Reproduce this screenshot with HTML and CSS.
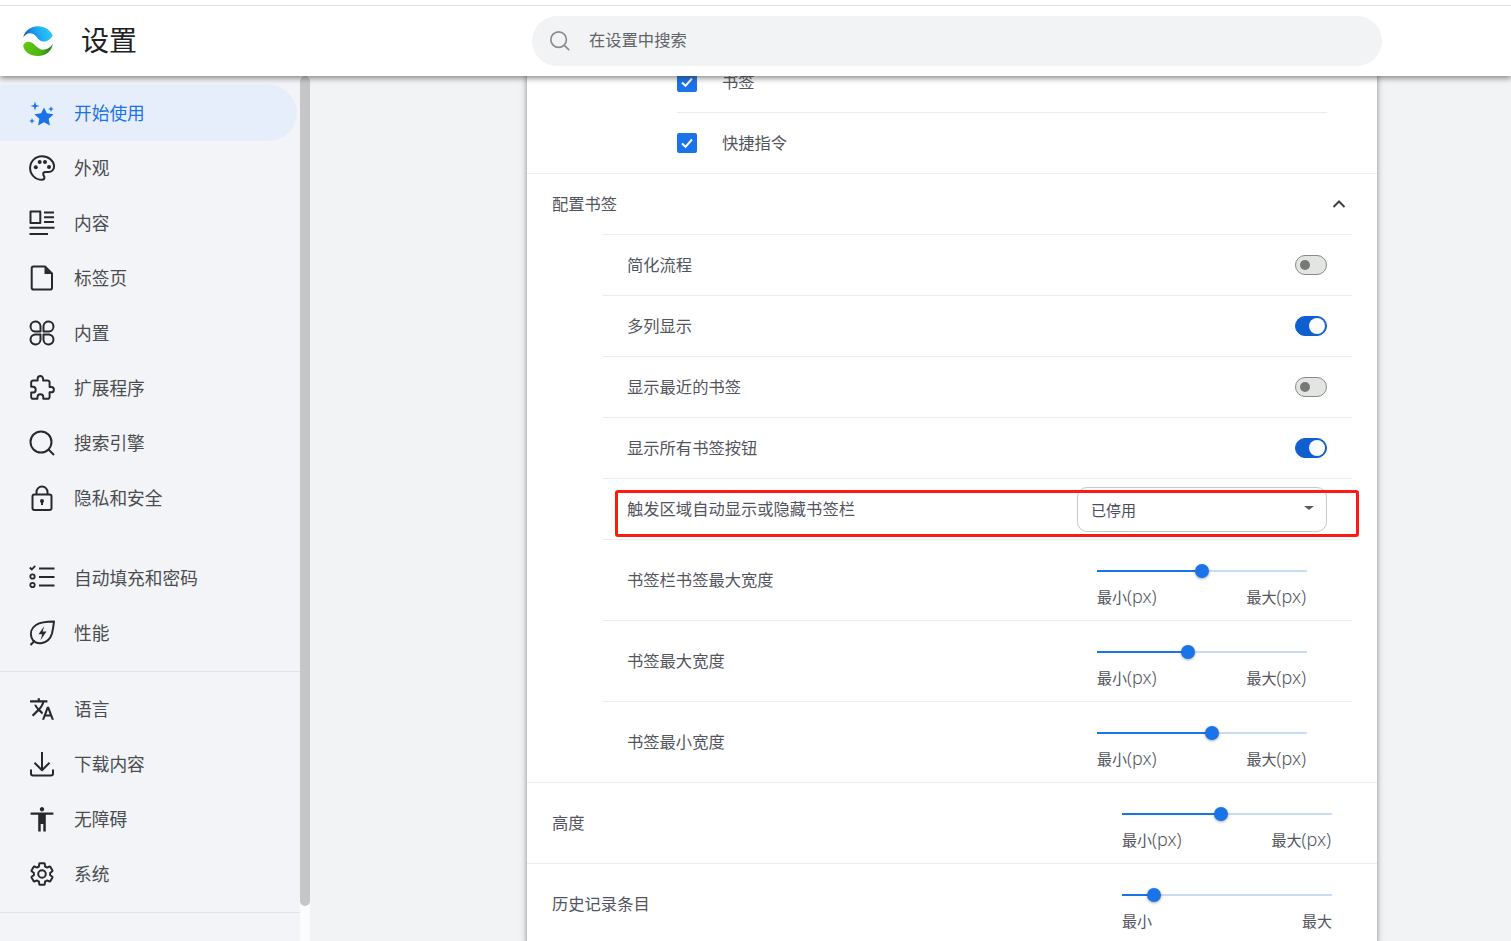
FILE: index.html
```html
<!DOCTYPE html>
<html lang="zh-CN">
<head>
<meta charset="utf-8">
<title>设置</title>
<link rel="stylesheet" href="styles.css">
</head>
<body>
<header class="topbar">
  <div class="brand">
    <svg class="logo" viewBox="0 0 30 30">
      <defs>
        <linearGradient id="lgb" x1="0" y1="0.5" x2="1" y2="0.3"><stop offset="0" stop-color="#1a4f9e"/><stop offset="0.3" stop-color="#1a8bea"/><stop offset="0.6" stop-color="#1fb2f5"/><stop offset="1" stop-color="#2bcdf9"/></linearGradient>
        <linearGradient id="lgg" x1="0" y1="0.4" x2="1" y2="0.6"><stop offset="0" stop-color="#62c814"/><stop offset="0.65" stop-color="#4cb212"/><stop offset="1" stop-color="#2a6f33"/></linearGradient>
      </defs>
      <path fill="url(#lgb)" d="M.3 11.500C1.500 4.500 8 .2 15 .2c6.500 0 12.500 3.800 14.700 9.300-2.200 4-6 6.500-10 6C15 15 13.500 8.500 8.500 7.500 5 6.800 2 8.500 .3 11.500z"/>
      <path fill="url(#lgg)" d="M.2 19C1.500 16.700 3.500 15.500 6 15.700c5 .4 8 7.500 13.500 8 4 .3 8-2 10.300-6.200C29.300 24.500 23 30 15 30 6.800 30 .5 25.500 .2 19z"/>
    </svg>
    <h1 class="title">设置</h1>
  </div>
  <div class="search">
    <svg class="search-ico" viewBox="0 0 24 24"><circle cx="10.500" cy="10.500" r="8.500"/><path d="M16.700 16.700L22 22"/></svg>
    <span>在设置中搜索</span>
  </div>
</header>
<div class="layout">
  <nav class="sidebar">
    <a class="nav-item active">
      <svg class="ico" viewBox="0 0 26 26"><path class="fill" d="M15 7.500l2.900 5.800 6.700.9-4.900 4.600 1.200 6.800-5.900-3.300-5.900 3.300 1.200-6.800-4.900-4.600 6.700-.9z"/><path class="fill" d="M6 1.500l1.100 3.400 3.400 1.100-3.400 1.100L6 10.500 4.900 7.100 1.500 6l3.400-1.100zM22 6l.8 2.200 2.200.8-2.200.8L22 12l-.8-2.200L19 9l2.200-.8zM3 18l.8 2.200L6 21l-2.200.8L3 24l-.8-2.200L0 21l2.200-.8z"/></svg>
      <span>开始使用</span>
    </a>
    <a class="nav-item">
      <svg class="ico" viewBox="0 0 26 26"><path class="line" d="M13 1.200C6.400 1.200 1.100 6.500 1.100 13S6.400 24.800 13 24.800c1.400 0 2.400-1 2.400-2.300 0-.7-.3-1.200-.6-1.600-.4-.5-.6-1-.6-1.600 0-1.300 1-2.300 2.300-2.300h2.800c3.600 0 5.800-2.600 5.800-5.700C24.900 5.700 19.600 1.200 13 1.200z"/><circle class="fill" cx="6.800" cy="12.300" r="2"/><circle class="fill" cx="10.700" cy="7" r="2"/><circle class="fill" cx="16" cy="7" r="2"/><circle class="fill" cx="20" cy="12" r="2"/></svg>
      <span>外观</span>
    </a>
    <a class="nav-item">
      <svg class="ico" viewBox="0 0 26 26"><path class="line" d="M1.500 1.500h9.800v11.500H1.500zM15 2.500h10M15 7.200h10M15 12h10M.5 17.800h25M.5 24h18.500"/></svg>
      <span>内容</span>
    </a>
    <a class="nav-item">
      <svg class="ico" viewBox="0 0 26 26"><path class="line" d="M4.500 1.500h11.500l7 7v14.200c0 1-.8 1.800-1.800 1.800H4.500c-1 0-1.800-.8-1.800-1.800V3.300c0-1 .8-1.800 1.800-1.800z"/><path class="fill" d="M15.500 2l7 7h-7z"/></svg>
      <span>标签页</span>
    </a>
    <a class="nav-item">
      <svg class="ico" viewBox="0 0 26 26"><path class="line" d="M11.500 11.500H6A5 5 0 1 1 11.500 6zM14.500 11.500H20A5 5 0 1 0 14.500 6zM11.500 14.500H6A5 5 0 1 0 11.500 20zM14.500 14.500H20A5 5 0 1 1 14.500 20z"/></svg>
      <span>内置</span>
    </a>
    <a class="nav-item">
      <svg class="ico" viewBox="0 0 24 24"><path class="line thin" d="M20.500 11H19V7c0-1.100-.9-2-2-2h-4V3.500C13 2.120 11.880 1 10.500 1S8 2.120 8 3.500V5H4c-1.100 0-2 .9-2 2v3.800h1.500c1.490 0 2.700 1.210 2.700 2.700s-1.210 2.700-2.700 2.700H2V20c0 1.100.9 2 2 2h3.800v-1.500c0-1.490 1.210-2.700 2.700-2.700s2.700 1.210 2.700 2.700V22H17c1.100 0 2-.9 2-2v-4h1.500c1.380 0 2.500-1.120 2.500-2.500S21.880 11 20.500 11z"/></svg>
      <span>扩展程序</span>
    </a>
    <a class="nav-item">
      <svg class="ico" viewBox="0 0 26 26"><circle class="line" cx="12" cy="12" r="10.500"/><path class="line" d="M19.500 19.500L25 25"/></svg>
      <span>搜索引擎</span>
    </a>
    <a class="nav-item">
      <svg class="ico" viewBox="0 0 26 26"><rect class="line" x="3.500" y="9.500" width="19" height="15.500" rx="2"/><path class="line" d="M7.500 9.500V7a5.500 5.500 0 0 1 11 0v2.500"/><circle class="fill" cx="13" cy="16" r="2"/><path class="fill" d="M12 16h2v4h-2z"/></svg>
      <span>隐私和安全</span>
    </a>
    <div class="nav-gap"></div>
    <a class="nav-item">
      <svg class="ico" viewBox="0 0 26 26"><path class="line thin" d="M.8 2.500l2 2L6.200.8"/><circle class="line thin" cx="3.500" cy="11.500" r="2.200"/><circle class="line thin" cx="3.500" cy="20" r="2.200"/><path class="line" d="M10 3.500h15.500M10 12h15.500M10 20.500h15.500"/></svg>
      <span>自动填充和密码</span>
    </a>
    <a class="nav-item">
      <svg class="ico" viewBox="0 0 26 26"><path class="line" d="M25 1.500c-7.500 0-13.500.5-18 3.500C2.500 8 1 13 2.500 17.500c1.200 4 5.500 6.500 10.500 5.500 5-1 8.500-4.500 10-9.500.8-3.500 1.500-7.500 2-12zM6 20.500l-4.500 4.500"/><path class="fill" d="M15.300 6l-5.800 8.300h3.700l-1.700 6 6-8.700h-3.900z"/></svg>
      <span>性能</span>
    </a>
    <div class="nav-div first"></div>
    <a class="nav-item">
      <svg class="ico" viewBox="0 0 24 24"><path class="fill" d="M12.870 15.070l-2.540-2.510.03-.03c1.740-1.940 2.980-4.170 3.710-6.530H17V4h-7V2H8v2H1v1.990h11.170C11.500 7.920 10.440 9.750 9 11.350 8.070 10.320 7.300 9.190 6.690 8h-2c.73 1.630 1.730 3.170 2.980 4.560l-5.090 5.020L4 19l5-5 3.110 3.110.76-2.040zM18.500 10h-2L12 22h2l1.120-3h4.750L21 22h2l-4.500-12zm-2.620 7l1.620-4.330L19.120 17h-3.240z"/></svg>
      <span>语言</span>
    </a>
    <a class="nav-item">
      <svg class="ico" viewBox="0 0 26 26"><path class="line" d="M13 1v18M5.500 11.800L13 19.200l7.500-7.400M2 18.500v4c0 1.200.8 2 2 2h18c1.200 0 2-.8 2-2v-4"/></svg>
      <span>下载内容</span>
    </a>
    <a class="nav-item">
      <svg class="ico" viewBox="0 0 24 24"><path class="fill" d="M12 1c1.100 0 2 .9 2 2s-.9 2-2 2-2-.9-2-2 .9-2 2-2zm10.500 7h-7v15.500h-2.300V16.500h-2.400v7H8.500V8h-7V6h21z"/></svg>
      <span>无障碍</span>
    </a>
    <a class="nav-item">
      <svg class="ico" viewBox="0 0 24 24"><path class="line thin" d="M19.430 12.980c.04-.32.07-.64.07-.98 0-.34-.03-.66-.07-.98l2.110-1.650c.19-.15.24-.42.12-.64l-2-3.460c-.09-.16-.26-.25-.44-.25-.06 0-.12.01-.17.03l-2.490 1c-.52-.4-1.080-.73-1.690-.98l-.38-2.650C14.460 2.180 14.250 2 14 2h-4c-.25 0-.46.18-.49.42l-.38 2.650c-.61.25-1.170.59-1.690.98l-2.490-1c-.06-.02-.12-.03-.18-.03-.17 0-.34.09-.43.25l-2 3.460c-.13.22-.07.49.12.64l2.110 1.650c-.04.32-.07.65-.07.98 0 .33.03.66.07.98l-2.110 1.650c-.19.15-.24.42-.12.64l2 3.460c.09.16.26.25.44.25.06 0 .12-.01.17-.03l2.490-1c.52.4 1.080.73 1.690.98l.38 2.650c.03.24.24.42.49.42h4c.25 0 .46-.18.49-.42l.38-2.650c.61-.25 1.170-.59 1.690-.98l2.490 1c.06.02.12.03.18.03.17 0 .34-.09.43-.25l2-3.460c.12-.22.07-.49-.12-.64l-2.110-1.650z"/><circle class="line thin" cx="12" cy="12" r="3.500"/></svg>
      <span>系统</span>
    </a>
    <div class="nav-div last"></div>
  </nav>
  <div class="scrolltrack"><div class="scrollthumb"></div></div>
  <main class="main">
    <section class="card">
      <div class="check-group">
        <div class="check-row bordered">
          <span class="checkbox"><svg viewBox="0 0 20 20"><path d="M5 10.500l3.500 3.300L15 6.500"/></svg></span>
          <span class="row-text">书签</span>
        </div>
        <div class="check-row second">
          <span class="checkbox"><svg viewBox="0 0 20 20"><path d="M5 10.500l3.500 3.300L15 6.500"/></svg></span>
          <span class="row-text">快捷指令</span>
        </div>
      </div>
      <div class="section-head">
        <span class="row-text">配置书签</span>
        <svg class="chev" viewBox="0 0 14 10"><path d="M1.500 8L7 2.500 12.500 8"/></svg>
      </div>
      <div class="sublist">
        <div class="sub-row">
          <span class="row-text">简化流程</span>
          <span class="toggle"><i></i></span>
        </div>
        <div class="sub-row">
          <span class="row-text">多列显示</span>
          <span class="toggle on"><i></i></span>
        </div>
        <div class="sub-row">
          <span class="row-text">显示最近的书签</span>
          <span class="toggle"><i></i></span>
        </div>
        <div class="sub-row">
          <span class="row-text">显示所有书签按钮</span>
          <span class="toggle on"><i></i></span>
        </div>
        <div class="sub-row highlight-row">
          <span class="row-text">触发区域自动显示或隐藏书签栏</span>
          <div class="select"><span>已停用</span><i class="caret"></i></div>
          <div class="redbox"></div>
        </div>
        <div class="sub-row slider-row">
          <span class="row-text">书签栏书签最大宽度</span>
          <div class="slider">
            <div class="track"><div class="fillbar" style="width:50%"></div></div>
            <div class="ends"><span>最小<b class="unit">(px)</b></span><span>最大<b class="unit">(px)</b></span></div>
          </div>
        </div>
        <div class="sub-row slider-row">
          <span class="row-text">书签最大宽度</span>
          <div class="slider">
            <div class="track"><div class="fillbar" style="width:43.500%"></div></div>
            <div class="ends"><span>最小<b class="unit">(px)</b></span><span>最大<b class="unit">(px)</b></span></div>
          </div>
        </div>
        <div class="sub-row slider-row">
          <span class="row-text">书签最小宽度</span>
          <div class="slider">
            <div class="track"><div class="fillbar" style="width:54.800%"></div></div>
            <div class="ends"><span>最小<b class="unit">(px)</b></span><span>最大<b class="unit">(px)</b></span></div>
          </div>
        </div>
      </div>
      <div class="top-row slider-row">
        <span class="row-text">高度</span>
        <div class="slider">
          <div class="track"><div class="fillbar" style="width:47%"></div></div>
          <div class="ends"><span>最小<b class="unit">(px)</b></span><span>最大<b class="unit">(px)</b></span></div>
        </div>
      </div>
      <div class="top-row slider-row">
        <span class="row-text">历史记录条目</span>
        <div class="slider">
          <div class="track"><div class="fillbar" style="width:15%"></div></div>
          <div class="ends plain"><span>最小</span><span>最大</span></div>
        </div>
      </div>
    </section>
  </main>
</div>
</body>
</html>
```
FILE: styles.css
```css
* { box-sizing: border-box; }
html, body { margin: 0; height: 100%; }
body {
  height: 941px;
  overflow: hidden;
  display: flex;
  flex-direction: column;
  background: #f1f3f5;
  font-family: "Noto Sans CJK SC", "Noto Sans", sans-serif;
  color: #4b4d55;
}

/* top bar */
.topbar {
  position: relative;
  z-index: 5;
  flex: none;
  height: 76px;
  display: flex;
  align-items: center;
  padding-top: 6px;
  background: #fff;
  box-shadow: 0 2px 6px rgba(50, 50, 50, .6);
}
.topbar::before {
  content: "";
  position: absolute;
  left: 0;
  right: 0;
  top: 5px;
  height: 1px;
  background: #dfdfdf;
}
.brand {
  width: 532px;
  flex: none;
  display: flex;
  align-items: center;
  padding-left: 23px;
}
.logo { width: 30px; height: 30px; flex: none; }
.title {
  margin: -4px 0 0 28px;
  font-size: 28px;
  font-weight: 400;
  line-height: 36px;
  color: #202124;
}
.search {
  width: 850px;
  height: 50px;
  display: flex;
  align-items: center;
  padding-left: 17px;
  border-radius: 25px;
  background: #f1f3f4;
  font-size: 16.300px;
  color: #5f6368;
}
.search span { margin-top: -4px; }
.search-ico {
  width: 22px;
  height: 22px;
  margin-right: 18px;
  fill: none;
  stroke: #8a8c90;
  stroke-width: 1.800;
}

/* layout */
.layout {
  flex: 1;
  min-height: 0;
  display: flex;
}
.sidebar {
  flex: none;
  width: 300px;
  padding-top: 9px;
  background: #f2f4f7;
}
.nav-item {
  height: 55px;
  display: flex;
  align-items: center;
  padding-left: 29px;
  gap: 19px;
  font-size: 17.700px;
  color: #4a4c50;
}
.nav-item span { margin-top: -2px; }
.nav-item.active {
  height: 56px;
  margin-right: 3px;
  margin-bottom: -1px;
  border-radius: 0 28px 28px 0;
  background: #e6eefc;
  color: #1a73e8;
}
.nav-item.active span { margin-top: -3px; }
.ico {
  width: 26px;
  height: 26px;
  flex: none;
  overflow: visible;
}
.ico .line {
  fill: none;
  stroke: #26282b;
  stroke-width: 2;
  stroke-linejoin: round;
}
.ico .line.thin { stroke-width: 1.800; }
.ico .fill { fill: #26282b; stroke: none; }
.active .ico .fill { fill: #1a73e8; }
.nav-gap { height: 25px; }
.nav-div { height: 1px; background: #dfe1e5; }
.nav-div.first { margin: 11px 0 9px; }
.nav-div.last { margin-top: 11px; }

.scrolltrack {
  flex: none;
  width: 10px;
  background: #fcfcfc;
}
.scrollthumb {
  height: 830px;
  border-radius: 5px;
  background: #c6c6c6;
}

/* main card */
.main {
  flex: 1;
  min-width: 0;
  padding-left: 217px;
}
.card {
  width: 850px;
  margin-top: -24px;
  background: #fff;
  box-shadow: 0 0 6px rgba(60, 64, 67, .6);
}
.row-text {
  margin-top: -2px;
  font-size: 16.300px;
  line-height: 22px;
  color: #53555e;
}

.check-group { padding: 0 50px 0 150px; }
.check-row {
  height: 61px;
  display: flex;
  align-items: center;
  gap: 25px;
}
.check-row.second { height: 60px; }
.check-row.bordered { border-bottom: 1px solid #ececec; }
.checkbox {
  width: 20px;
  height: 20px;
  flex: none;
  border-radius: 2px;
  background: #1a73e8;
}
.checkbox svg {
  display: block;
  width: 20px;
  height: 20px;
  fill: none;
  stroke: #fff;
  stroke-width: 2;
}
.section-head {
  height: 61px;
  display: flex;
  align-items: center;
  justify-content: space-between;
  padding: 0 31px 0 25px;
  border-top: 1px solid #ececec;
}
.chev {
  width: 14px;
  height: 10px;
  fill: none;
  stroke: #3c4043;
  stroke-width: 2;
}
.sublist { margin: 0 25px 0 76px; }
.sub-row {
  height: 61px;
  display: flex;
  align-items: center;
  justify-content: space-between;
  padding: 0 25px 0 24px;
  border-top: 1px solid #ececec;
}
.toggle {
  width: 32px;
  height: 20px;
  display: flex;
  align-items: center;
  justify-content: flex-start;
  padding-left: 4px;
  border: 1px solid #888a86;
  border-radius: 10px;
  background: #e3e5e2;
}
.toggle i {
  width: 10px;
  height: 10px;
  border-radius: 50%;
  background: #777976;
}
.toggle.on {
  justify-content: flex-end;
  padding: 0 1px 0 0;
  border-color: #0f5fd0;
  background: #0f5fd0;
}
.toggle.on i {
  width: 16px;
  height: 16px;
  background: #fff;
}
.highlight-row { position: relative; }
.select {
  width: 250px;
  height: 45px;
  display: flex;
  align-items: center;
  justify-content: space-between;
  padding: 0 12px 0 13px;
  border: 1px solid #c9c9c9;
  border-radius: 10px;
  background: #fff;
  font-size: 15px;
  color: #4b4d58;
}
.caret {
  width: 0;
  height: 0;
  margin-top: -2px;
  border-left: 5px solid transparent;
  border-right: 5px solid transparent;
  border-top: 4px solid #5a5c63;
}
.redbox {
  position: absolute;
  left: 12px;
  top: 11px;
  width: 744px;
  height: 47px;
  border: 3px solid #fd1a14;
  border-radius: 3px;
}
.slider-row { height: 81px; }
.slider {
  width: 210px;
  margin-right: 20px;
  margin-top: 4px;
  align-self: flex-start;
  padding-top: 26px;
}
.track {
  height: 2px;
  background: #c8dcf6;
}
.fillbar {
  position: relative;
  height: 2px;
  background: #1a73e8;
}
.fillbar::after {
  content: "";
  position: absolute;
  right: -7px;
  top: -6px;
  width: 14px;
  height: 14px;
  border-radius: 50%;
  background: #1a73e8;
  box-shadow: 0 1px 3px rgba(0, 0, 0, .35);
}
.ends {
  display: flex;
  justify-content: space-between;
  margin-top: 13px;
  font-size: 15px;
  line-height: 22px;
  color: #53555e;
}
.ends.plain { margin-top: 14px; }
.unit {
  margin-right: 1px;
  font-family: "Noto Sans", sans-serif;
  font-size: 18px;
  font-weight: 300;
}
.top-row {
  display: flex;
  align-items: center;
  justify-content: space-between;
  padding: 0 25px;
  border-top: 1px solid #ececec;
}
```
